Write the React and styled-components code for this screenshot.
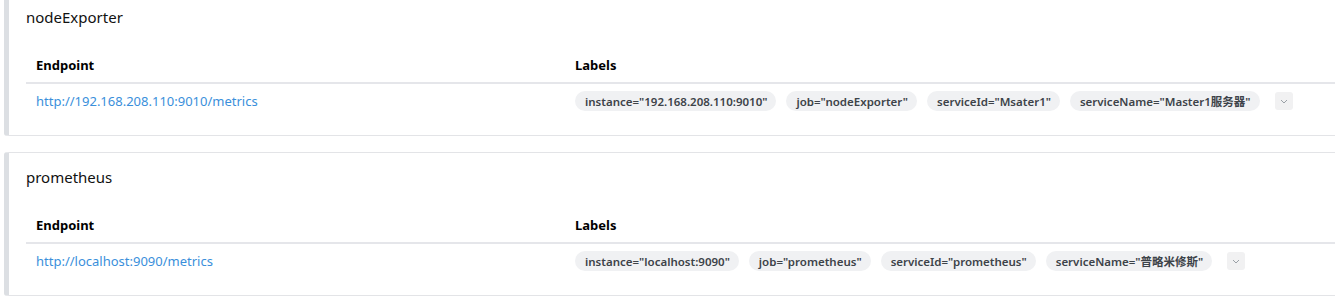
import React from 'react';
import styled, { createGlobalStyle } from 'styled-components';

const GlobalStyle = createGlobalStyle`
  body {
    margin: 0;
    background: #fff;
    font-family: "Noto Sans", "Noto Sans CJK SC", sans-serif;
    color: #212529;
  }
`;

const Page = styled.div`
  margin-top: -8px;
  padding-left: 4px;
  overflow: hidden;
  display: flex;
  flex-direction: column;
  gap: 16px;
`;

const Card = styled.section`
  margin-right: -30px;
  border: 1px solid #e3e4e7;
  border-left: 5px solid #dcdfe3;
  border-radius: 3px;
  padding: 12px 16px 17px 17px;
  background: #fff;
`;

const Title = styled.h2`
  margin: 0 0 18px;
  font-size: 15px;
  font-weight: 400;
  line-height: 24px;
  color: #111;
`;

const Table = styled.table`
  width: 100%;
  border-collapse: collapse;
  font-size: 13px;
`;

const Th = styled.th`
  text-align: left;
  font-weight: 700;
  color: #000;
  padding: 9px 10px 8px;
  line-height: 18px;
  border-bottom: 2px solid #e5e6ea;
  width: ${props => props.width || 'auto'};
`;

const Td = styled.td`
  padding: 7px 10px 7px;
  vertical-align: middle;
`;

const Link = styled.a`
  color: #3a8fdb;
  text-decoration: none;
`;

const Labels = styled.div`
  display: flex;
  align-items: center;
  gap: 10px;
`;

const Pill = styled.span`
  display: inline-flex;
  align-items: center;
  height: 20px;
  padding: 0 9px 0 10px;
  border-radius: 10px;
  background: #f0f1f3;
  color: #3d4349;
  font-size: 11.5px;
  font-weight: 600;
  white-space: nowrap;
`;

const Toggle = styled.button`
  margin-left: 5px;
  width: 18px;
  height: 18px;
  padding: 0;
  border: none;
  border-radius: 3px;
  background: #f1f1f2;
  display: flex;
  align-items: center;
  justify-content: center;
`;

const Chevron = () => (
  <svg width="8" height="5" viewBox="0 0 8 5">
    <path d="M1 1 L4 4 L7 1" fill="none" stroke="#9aa0a6" strokeWidth="1" />
  </svg>
);

const targets = [
  {
    name: 'nodeExporter',
    endpoint: 'http://192.168.208.110:9010/metrics',
    labels: [
      ['instance', '192.168.208.110:9010'],
      ['job', 'nodeExporter'],
      ['serviceId', 'Msater1'],
      ['serviceName', 'Master1服务器'],
    ],
  },
  {
    name: 'prometheus',
    endpoint: 'http://localhost:9090/metrics',
    labels: [
      ['instance', 'localhost:9090'],
      ['job', 'prometheus'],
      ['serviceId', 'prometheus'],
      ['serviceName', '普略米修斯'],
    ],
  },
];

const App = () => (
  <>
    <GlobalStyle />
    <Page>
      {targets.map(t => (
        <Card key={t.name}>
          <Title>{t.name}</Title>
          <Table>
            <thead>
              <tr>
                <Th width="519px">Endpoint</Th>
                <Th>Labels</Th>
              </tr>
            </thead>
            <tbody>
              <tr>
                <Td>
                  <Link href="#">{t.endpoint}</Link>
                </Td>
                <Td>
                  <Labels>
                    {t.labels.map(([k, v]) => (
                      <Pill key={k}>{k}="{v}"</Pill>
                    ))}
                    <Toggle>
                      <Chevron />
                    </Toggle>
                  </Labels>
                </Td>
              </tr>
            </tbody>
          </Table>
        </Card>
      ))}
    </Page>
  </>
);

export default App;
